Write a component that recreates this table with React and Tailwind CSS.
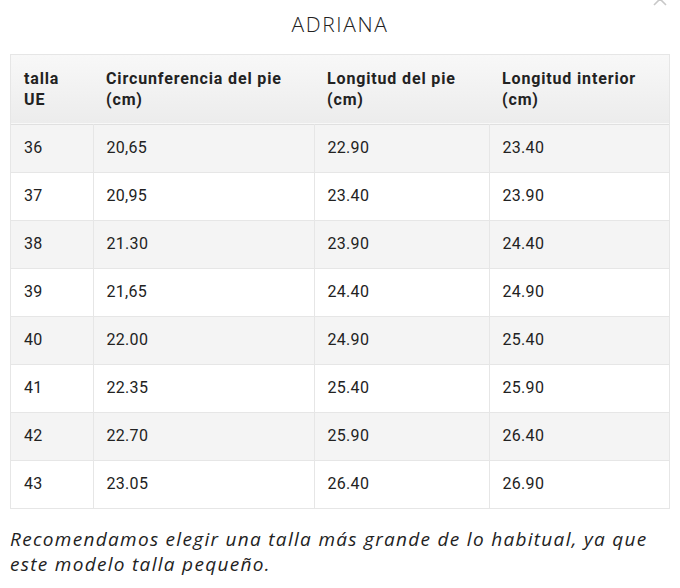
import React from "react"

const rows = [
  ["36", "20,65", "22.90", "23.40"],
  ["37", "20,95", "23.40", "23.90"],
  ["38", "21.30", "23.90", "24.40"],
  ["39", "21,65", "24.40", "24.90"],
  ["40", "22.00", "24.90", "25.40"],
  ["41", "22.35", "25.40", "25.90"],
  ["42", "22.70", "25.90", "26.40"],
  ["43", "23.05", "26.40", "26.90"],
]

const headers = [
  ["talla", "UE"],
  ["Circunferencia del pie", "(cm)"],
  ["Longitud del pie", "(cm)"],
  ["Longitud interior", "(cm)"],
]

const colW = ["w-[82px]", "w-[221px]", "w-[175px]", "w-auto"]

export default function App() {
  return (
    <div className="relative w-[680px] h-[588px] bg-white overflow-hidden">
      <button className="absolute right-[12px] top-[-9px] text-[#c8c8c8]">
        <svg width="16" height="16" viewBox="0 0 16 16" fill="none" stroke="currentColor" strokeWidth="1.6">
          <path d="M2 2 L14 14 M14 2 L2 14" />
        </svg>
      </button>
      <h1 className="pt-[10px] h-[54px] text-center text-[21px] leading-[28px] font-light tracking-[1.6px] text-[#222] font-['Open_Sans',sans-serif]">
        ADRIANA
      </h1>
      <div className="mx-[10px] border border-[#e6e6e6]">
        <table className="w-full border-collapse font-['Roboto','Liberation_Sans',sans-serif] text-[#222]">
          <thead>
            <tr className="h-[69px] bg-gradient-to-b from-[#f8f8f8] to-[#ececec] border-b border-[#e0e0e0]">
              {headers.map((h, i) => (
                <th
                  key={i}
                  className={`${colW[i]} px-[13px] text-left align-middle text-[16px] leading-[21px] font-bold tracking-[0.85px]`}
                >
                  {h[0]}
                  <br />
                  {h[1]}
                </th>
              ))}
            </tr>
          </thead>
          <tbody>
            {rows.map((r, ri) => (
              <tr
                key={ri}
                className={`h-[48px] ${ri % 2 === 0 ? "bg-[#f4f4f4]" : "bg-white"} ${ri > 0 ? "border-t border-[#e6e6e6]" : ""}`}
              >
                {r.map((c, ci) => (
                  <td
                    key={ci}
                    className={`px-[13px] text-[16px] align-middle tracking-[0.3px] ${ci > 0 ? "border-l border-[#e6e6e6]" : ""}`}
                  >
                    {c}
                  </td>
                ))}
              </tr>
            ))}
          </tbody>
        </table>
      </div>
      <p className="mx-[10px] mt-[18px] text-[19px] leading-[25px] italic text-[#222] tracking-[1.3px] font-['Open_Sans',sans-serif]">
        Recomendamos elegir una talla más grande de lo habitual, ya que este modelo talla pequeño.
      </p>
    </div>
  )
}
